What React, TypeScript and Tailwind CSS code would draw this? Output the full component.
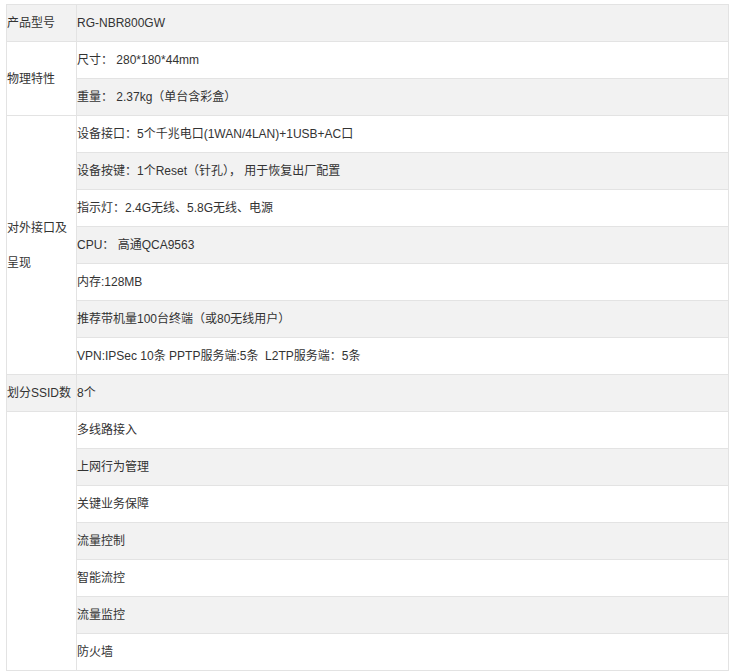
import React from 'react';

type Row = { label?: string; span?: number; value: string };

const rows: Row[] = [
  { label: '产品型号', value: 'RG-NBR800GW' },
  { label: '物理特性', span: 2, value: '尺寸： 280*180*44mm' },
  { value: '重量： 2.37kg（单台含彩盒）' },
  { label: '对外接口及呈现', span: 7, value: '设备接口：5个千兆电口(1WAN/4LAN)+1USB+AC口' },
  { value: '设备按键：1个Reset（针孔）， 用于恢复出厂配置' },
  { value: '指示灯：2.4G无线、5.8G无线、电源' },
  { value: 'CPU： 高通QCA9563' },
  { value: '内存:128MB' },
  { value: '推荐带机量100台终端（或80无线用户）' },
  { value: 'VPN:IPSec 10条 PPTP服务端:5条  L2TP服务端：5条' },
  { label: '划分SSID数', value: '8个' },
  { label: '', span: 7, value: '多线路接入' },
  { value: '上网行为管理' },
  { value: '关键业务保障' },
  { value: '流量控制' },
  { value: '智能流控' },
  { value: '流量监控' },
  { value: '防火墙' },
];

const cell = 'border border-[#e3e3e3] p-0 pt-[1px] leading-[35px] text-[12px] text-[#333] align-middle text-left font-normal';

export default function App() {
  return (
    <div className="bg-white min-h-[671px] pt-[4px] pl-[6px] font-['Liberation_Sans','Noto_Sans_CJK_SC',sans-serif]">
      <table className="border-collapse w-[723px]">
        <tbody>
          {rows.map((r, i) => (
            <tr key={i} className={i % 2 === 0 ? 'bg-[#f2f2f2]' : 'bg-white'}>
              {r.label !== undefined && (
                <td rowSpan={r.span || 1} className={`${cell} w-[70px]`}>
                  {r.label}
                </td>
              )}
              <td className={`${cell} whitespace-pre`}>{r.value}</td>
            </tr>
          ))}
        </tbody>
      </table>
    </div>
  );
}
